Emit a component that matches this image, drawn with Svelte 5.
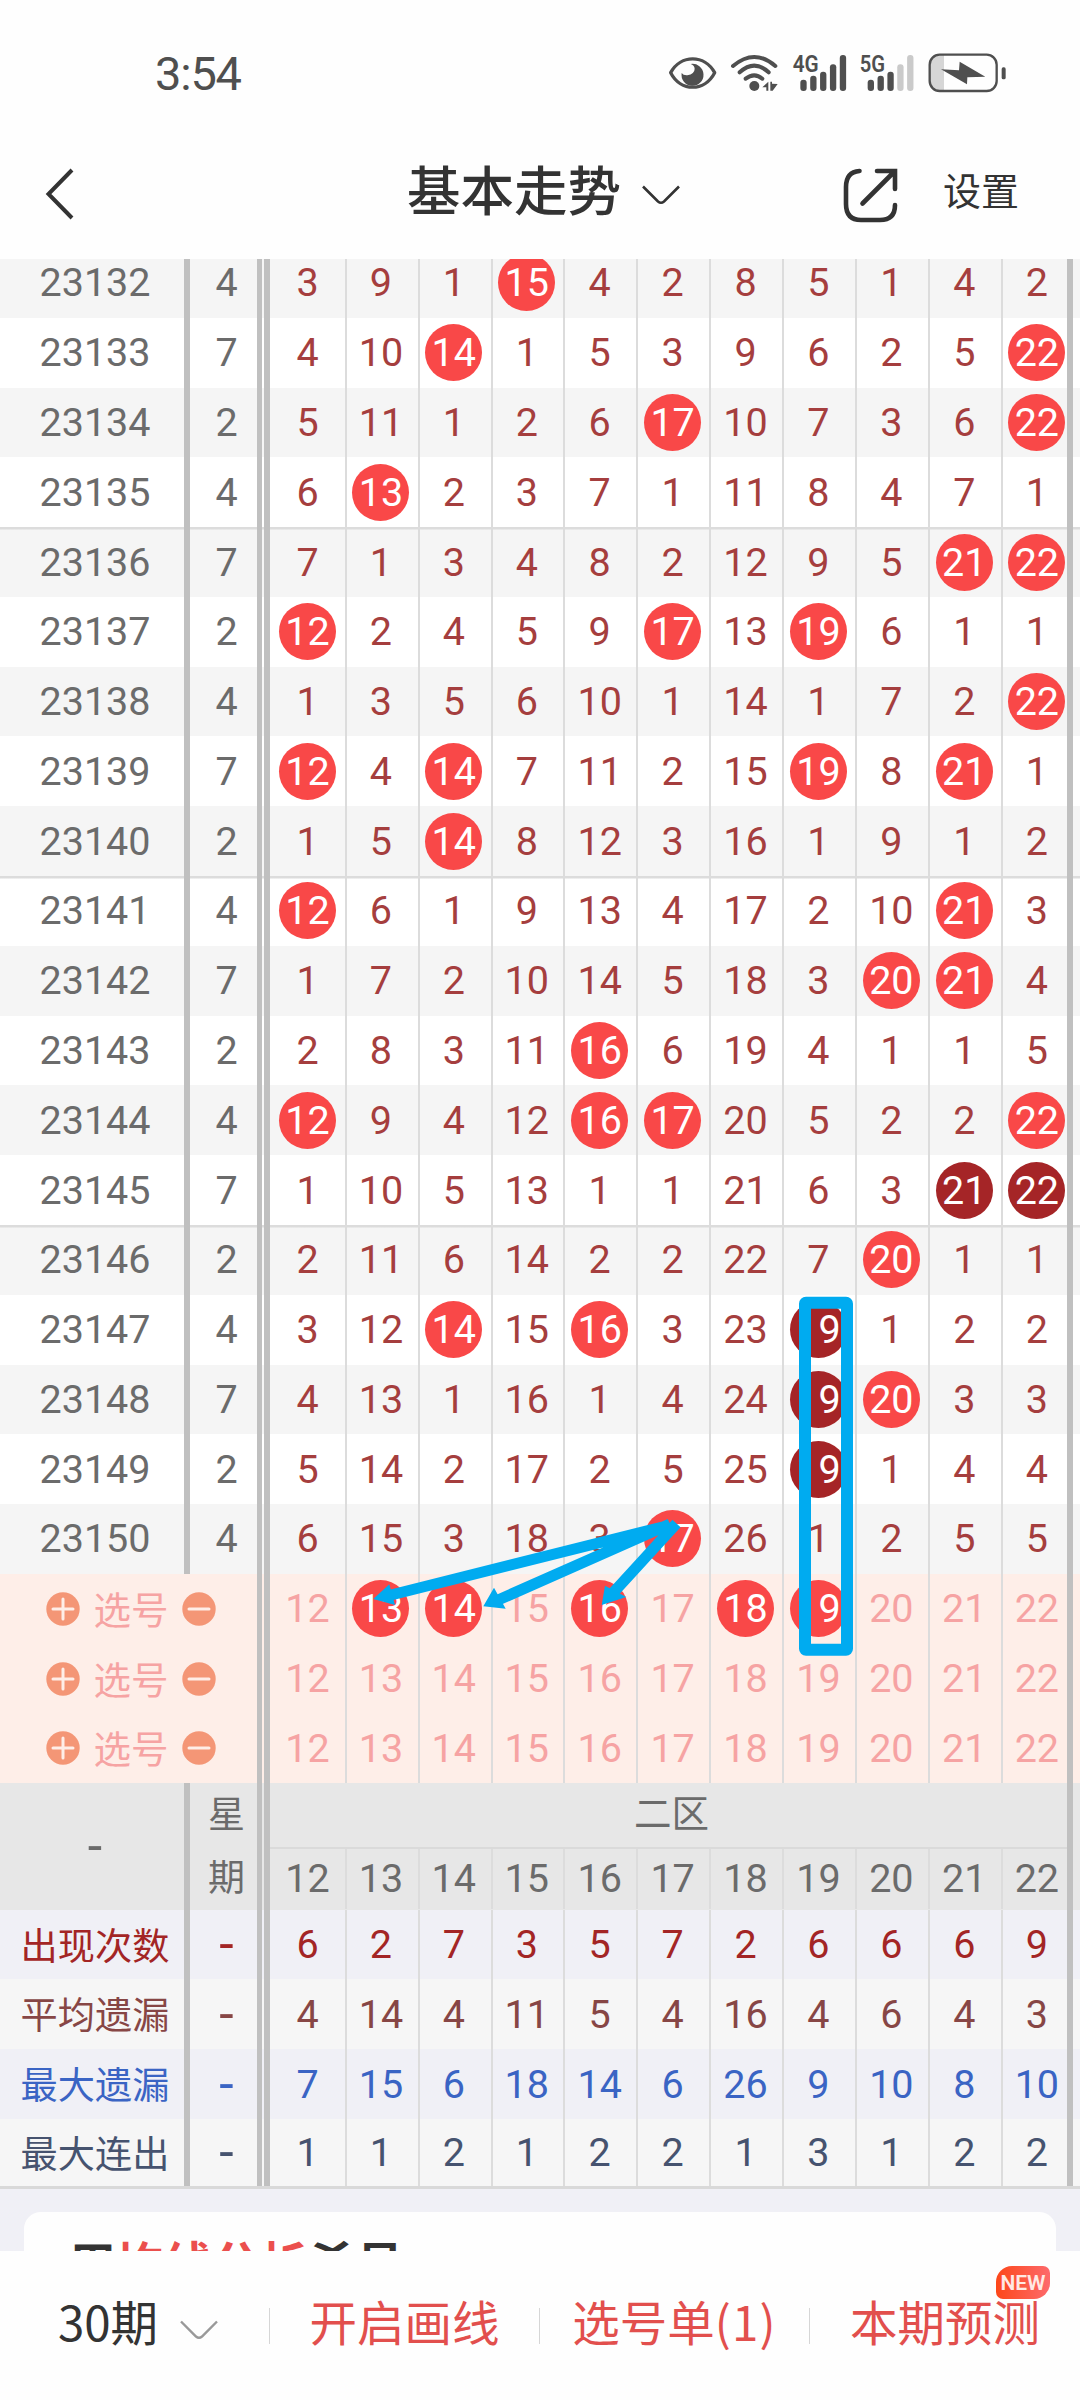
<svelte:options runes />
<script lang="ts">
  /**
   * Lottery trend chart, zone two (12-22).
   * Cell notation: `*n` is a drawn number, `#n` a repeated one (dark ball).
   */
  const columns = [12, 13, 14, 15, 16, 17, 18, 19, 20, 21, 22];

  const source: [string, number, string][] = [
    ['23132', 4, '3 9 1 *15 4 2 8 5 1 4 2'],
    ['23133', 7, '4 10 *14 1 5 3 9 6 2 5 *22'],
    ['23134', 2, '5 11 1 2 6 *17 10 7 3 6 *22'],
    ['23135', 4, '6 *13 2 3 7 1 11 8 4 7 1'],
    ['23136', 7, '7 1 3 4 8 2 12 9 5 *21 *22'],
    ['23137', 2, '*12 2 4 5 9 *17 13 *19 6 1 1'],
    ['23138', 4, '1 3 5 6 10 1 14 1 7 2 *22'],
    ['23139', 7, '*12 4 *14 7 11 2 15 *19 8 *21 1'],
    ['23140', 2, '1 5 *14 8 12 3 16 1 9 1 2'],
    ['23141', 4, '*12 6 1 9 13 4 17 2 10 *21 3'],
    ['23142', 7, '1 7 2 10 14 5 18 3 *20 *21 4'],
    ['23143', 2, '2 8 3 11 *16 6 19 4 1 1 5'],
    ['23144', 4, '*12 9 4 12 *16 *17 20 5 2 2 *22'],
    ['23145', 7, '1 10 5 13 1 1 21 6 3 #21 #22'],
    ['23146', 2, '2 11 6 14 2 2 22 7 *20 1 1'],
    ['23147', 4, '3 12 *14 15 *16 3 23 #19 1 2 2'],
    ['23148', 7, '4 13 1 16 1 4 24 #19 *20 3 3'],
    ['23149', 2, '5 14 2 17 2 5 25 #19 1 4 4'],
    ['23150', 4, '6 15 3 18 3 *17 26 1 2 5 5'],
  ];

  const draws = source.map(([period, weekday, values]) => ({
    period,
    weekday,
    cells: values.split(' ').map((v) => ({
      text: v.replace(/[*#]/, ''),
      hit: /[*#]/.test(v),
      repeat: v[0] === '#',
    })),
    group: Number(period) % 5 === 1,
  }));

  let picks = $state([[13, 14, 16, 18, 19], [], []] as number[][]);

  const stats = [
    { label: '出现次数', tone: 'count', values: [6, 2, 7, 3, 5, 7, 2, 6, 6, 6, 9] },
    { label: '平均遗漏', tone: 'average', values: [4, 14, 4, 11, 5, 4, 16, 4, 6, 4, 3] },
    { label: '最大遗漏', tone: 'longest', values: [7, 15, 6, 18, 14, 6, 26, 9, 10, 8, 10] },
    { label: '最大连出', tone: 'streak', values: [1, 1, 2, 1, 2, 2, 1, 3, 1, 2, 2] },
  ];

  function toggle(row: number, n: number) {
    const picked = picks[row];
    picks[row] = picked.includes(n) ? picked.filter((p) => p !== n) : [...picked, n];
  }

  const bars = [104, 92, 80, 58, 30];
</script>

<div class="screen">
  <header class="status">
    <span class="clock">3:54</span>
    <div class="status-icons">
      <svg viewBox="0 0 190 165" width="63.33" height="55" aria-hidden="true">
        <path d="M32 83C62 28 134 28 164 83C134 141 62 141 32 83Z" fill="none" stroke="#4f4f4f" stroke-width="10" stroke-linejoin="round" />
        <path d="M92 57A33 33 0 1 1 65 84Q70 92 82 91Q104 87 104 71Q103 61 92 57Z" fill="#4f4f4f" />
      </svg>
      <svg viewBox="190 0 190 165" width="63.33" height="55" aria-hidden="true">
        <g fill="none" stroke="#4f4f4f" stroke-width="12" stroke-linecap="round">
          <path d="M220 63Q284 9 347 63" />
          <path d="M240 82Q284 42 327 82" />
          <path d="M258 101Q284 81 308 101" />
        </g>
        <circle cx="284" cy="123" r="15" fill="#4f4f4f" />
        <path d="M308 127L326 110V137H320V127ZM332 110H337V116L354 117L339 137H332Z" fill="#4f4f4f" />
      </svg>
      <svg viewBox="380 0 200 165" width="66.67" height="55" aria-hidden="true">
        <text x="397" y="82" textLength="78" lengthAdjust="spacingAndGlyphs">4G</text>
        {#each bars as top, i}
          <rect x={420 + i * 29.6} y={top} width="19" height={138 - top} rx="9" fill="#4f4f4f" />
        {/each}
      </svg>
      <svg viewBox="580 0 200 165" width="66.67" height="55" aria-hidden="true">
        <text x="600" y="82" textLength="76" lengthAdjust="spacingAndGlyphs">5G</text>
        {#each bars as top, i}
          <rect x={624 + i * 29.6} y={top} width="19" height={138 - top} rx="9" fill={i > 2 ? '#cacaca' : '#4f4f4f'} />
        {/each}
      </svg>
      <svg viewBox="780 0 270 165" width="90" height="55" aria-hidden="true">
        <path d="M852 29H838Q810 29 810 57V110Q810 138 838 138H852Z" fill="#d6d6d6" />
        <rect x="809" y="29" width="201" height="109" rx="30" fill="none" stroke="#4f4f4f" stroke-width="7" />
        <path d="M843 73L897 76L899 50L976 95L922 97L921 118Z" fill="#4f4f4f" />
        <rect x="1025" y="67" width="12" height="36" rx="5" fill="#4f4f4f" />
      </svg>
    </div>
  </header>

  <nav class="topbar">
    <button class="back" aria-label="返回">
      <svg viewBox="0 0 32 52" width="32" height="52" aria-hidden="true">
        <path d="M28 2L4.500 26L28 50" fill="none" stroke="#333" stroke-width="4" />
      </svg>
    </button>
    <button class="title">
      基本走势
      <svg viewBox="0 0 40 22" width="40" height="22" aria-hidden="true">
        <path d="M2 2.500L17 17.500Q20 20 23 17.500L38 2.500" fill="none" stroke="#333" stroke-width="2.600" />
      </svg>
    </button>
    <button class="share" aria-label="分享">
      <svg viewBox="0 0 60 64" width="60" height="64" aria-hidden="true">
        <g fill="none" stroke="#333" stroke-width="4.600" stroke-linecap="round">
          <path d="M19.500 9Q6 10 6 25V42Q6 58 21 58H40Q55 58 55 43" />
          <path d="M37 9H55V27M54 10L22.500 41.500" />
        </g>
      </svg>
    </button>
    <button class="settings">设置</button>
  </nav>

  <main class="viewport">
    <div class="chart">
      {#each draws as row, i}
        <div class="row" class:shade={i % 2 === 0} class:group={row.group}>
          <span class="label">{row.period}</span>
          <i class="rule"></i>
          <span class="day">{row.weekday}</span>
          <i class="rule double"></i>
          {#each row.cells as cell}
            <span class="cell">
              <b class:ball={cell.hit} class:repeat={cell.repeat}>{cell.text}</b>
            </span>
          {/each}
          <i class="rule"></i>
        </div>
      {/each}

      {#each picks as picked, r}
        <div class="row pick">
          <div class="picker">
            <svg viewBox="0 0 34 34" width="34" height="34" aria-hidden="true">
              <circle cx="17" cy="17" r="16.700" fill="#f49676" />
              <path d="M7 17H27M17 7V27" stroke="#feeee8" stroke-width="3" stroke-linecap="round" />
            </svg>
            <span>选号</span>
            <svg viewBox="0 0 34 34" width="34" height="34" aria-hidden="true">
              <circle cx="17" cy="17" r="16.700" fill="#f49676" />
              <path d="M7 17H27" stroke="#feeee8" stroke-width="3" stroke-linecap="round" />
            </svg>
          </div>
          <i class="rule double"></i>
          {#each columns as n}
            <button class="cell" onclick={() => toggle(r, n)}>
              <b class:ball={picked.includes(n)}>{n}</b>
            </button>
          {/each}
          <i class="rule"></i>
        </div>
      {/each}

      <div class="row heading">
        <span class="label dash">-</span>
        <i class="rule"></i>
        <span class="day">星<br />期</span>
        <i class="rule double"></i>
        <div class="zone">
          <span class="zone-name">二区</span>
          <div class="zone-columns">
            {#each columns as n}
              <span class="cell"><b>{n}</b></span>
            {/each}
          </div>
        </div>
        <i class="rule"></i>
      </div>

      {#each stats as stat}
        <div class="row stat {stat.tone}">
          <span class="label">{stat.label}</span>
          <i class="rule"></i>
          <span class="day dash">-</span>
          <i class="rule double"></i>
          {#each stat.values as value}
            <span class="cell"><b>{value}</b></span>
          {/each}
          <i class="rule"></i>
        </div>
      {/each}

      <!-- hand-drawn marks over the chart, in chart pixels -->
      <svg class="marks" viewBox="0 248 1080 1942" width="1080" height="1942" aria-hidden="true">
        <rect x="805" y="1302.700" width="42" height="347" rx="1" />
        <path d="M387 1596L664.500 1526.500M497 1600.500L670 1524M612 1594L676.500 1523.500" />
        <path class="head" d="M373.300 1599L389.300 1584.300L395 1605ZM483.300 1606.300L494 1587.700L505.700 1608.700ZM601.700 1605L605 1585.700L626.300 1597Z" />
      </svg>
    </div>

    <section class="card">
      <h2>用<em>均线分析</em>杀号</h2>
    </section>
  </main>

  <footer class="actions">
    <button class="periods">
      <span>30期</span>
      <svg viewBox="0 0 40 22" width="40" height="22" aria-hidden="true">
        <path d="M2 2.500L17 17.500Q20 20 23 17.500L38 2.500" fill="none" stroke="#999" stroke-width="2.400" />
      </svg>
    </button>
    <button><span>开启画线</span></button>
    <button><span>选号单<span class="count-mark">(1)</span></span></button>
    <button><span>本期预测</span><span class="badge">NEW</span></button>
  </footer>
</div>

<style>
  :global(body) {
    background: #fff;
  }
  .screen {
    display: flex;
    flex-direction: column;
    width: 1080px;
    height: 2400px;
    overflow: hidden;
    background: #fefefe;
    color: #333;
    font-family: Roboto, 'Noto Sans CJK SC', sans-serif;
  }
  button {
    padding: 0;
    border: none;
    background: none;
    color: inherit;
    font: inherit;
  }
  svg {
    flex-shrink: 0;
  }

  .status {
    display: flex;
    justify-content: space-between;
    height: 128px;
    padding: 0 70px 0 155px;
    box-sizing: border-box;
  }
  .clock {
    padding-top: 44px;
    color: #4f4f4f;
    font-size: 47px;
    line-height: 60px;
    letter-spacing: -1.2px;
  }
  .status-icons {
    display: flex;
    padding-top: 45px;
  }
  .status-icons text {
    font-size: 69px;
    font-weight: 600;
    fill: #4f4f4f;
  }

  .topbar {
    display: grid;
    grid-template-columns: 405px 435px 60px 1fr;
    align-items: center;
    height: 131px;
    font-family: 'Noto Sans CJK SC', sans-serif;
  }
  .back {
    display: flex;
    padding-left: 44px;
  }
  .title {
    display: flex;
    align-items: center;
    gap: 20px;
    padding: 0 0 12px 2px;
    font-size: 53.5px;
    font-weight: 500;
    line-height: 64px;
    white-space: nowrap;
  }
  .title svg {
    margin-top: 14px;
  }
  .share {
    display: flex;
  }
  .settings {
    padding: 0 0 9px 43px;
    font-size: 38px;
    line-height: 50px;
    text-align: left;
  }

  .viewport {
    display: flex;
    flex-direction: column;
    height: 1992px;
    overflow: hidden;
    background: #f0f0f6;
  }
  .chart {
    position: relative;
    flex-shrink: 0;
    margin-top: -11px;
    border-bottom: 3px solid #d9d9d9;
    background: #fff;
  }
  .row {
    display: flex;
    height: 69.79px;
    color: #a53e3e;
    font-size: 39.5px;
  }
  .shade {
    background-color: #f5f5f5;
  }
  .group {
    background-image: linear-gradient(#dcdcdc, #dcdcdc);
    background-size: 100% 2.5px;
    background-repeat: no-repeat;
  }
  .label,
  .day {
    display: flex;
    align-items: center;
    justify-content: center;
    flex-shrink: 0;
    box-sizing: border-box;
    padding-left: 6px;
    color: #6b6b6b;
  }
  .label {
    width: 184px;
  }
  .day {
    width: 67px;
  }
  .rule {
    flex-shrink: 0;
    width: 6px;
    background: #c0c0c0;
  }
  .double {
    width: 2.4px;
    border: solid #c0c0c0;
    border-width: 0 6px 0 5.8px;
    background: none;
  }
  .cell {
    display: flex;
    align-items: center;
    justify-content: center;
    flex-shrink: 0;
    box-sizing: border-box;
    width: 72.93px;
    padding-right: 2.5px;
    border-right: 2.5px solid #dcdcdc;
  }
  .double + .cell,
  .zone-columns .cell:first-child {
    width: 76.3px;
    padding-right: 0;
  }
  .cell:has(+ .rule),
  .zone-columns .cell:last-child {
    width: 63.8px;
    padding: 0 0 0 4px;
    border-right: none;
  }
  b {
    font-weight: 400;
  }
  .ball {
    width: 57px;
    height: 57px;
    border-radius: 50%;
    background: #f94848;
    color: #fff;
    line-height: 57px;
    text-align: center;
  }
  .repeat {
    background: #a52527;
  }

  .pick {
    background: #feeee8;
    color: #f6a3a3;
  }
  .picker {
    display: flex;
    align-items: center;
    gap: 13.5px;
    flex-shrink: 0;
    width: 257px;
    box-sizing: border-box;
    padding-left: 46px;
    font-size: 37.5px;
  }
  .picker span {
    padding-bottom: 3px;
  }

  .heading {
    height: 126.5px;
    background: #e7e7e7;
    color: #6b6b6b;
  }
  .heading .day {
    padding-top: 2px;
    font-size: 37px;
    line-height: 63.5px;
  }
  .zone {
    flex-shrink: 0;
    width: 796.4px;
  }
  .zone-name {
    display: block;
    height: 64px;
    padding-left: 6px;
    border-bottom: 2.5px solid #dadada;
    font-size: 37.5px;
    line-height: 63px;
    text-align: center;
  }
  .zone-columns {
    display: flex;
    height: 60px;
  }
  .zone-columns b {
    padding-bottom: 2px;
  }
  .dash {
    font-size: 52px;
  }

  .stat .label {
    padding-bottom: 2px;
    font-size: 37.2px;
  }
  .stat .label,
  .stat .day {
    color: inherit;
  }
  .count {
    background: #f0f0f6;
    color: #a32525;
  }
  .average {
    background: #f6f6f6;
    color: #874645;
  }
  .longest {
    background: #f0f0f6;
    color: #3a64c4;
  }
  .streak {
    height: 67px;
    background: #f6f6f6;
    color: #46536f;
  }

  .marks {
    position: absolute;
    top: 0;
    left: 0;
    fill: none;
    stroke: #00abf0;
    stroke-width: 11;
    stroke-linejoin: round;
    pointer-events: none;
  }
  .marks rect {
    stroke-width: 12;
  }
  .marks .head {
    fill: #00abf0;
    stroke: none;
  }

  .card {
    flex-shrink: 0;
    height: 200px;
    margin: 23px 24px 0;
    padding: 14px 44px;
    border-radius: 17px;
    background: #fefefe;
  }
  .card h2 {
    margin: 0;
    font-family: 'Noto Sans CJK SC', sans-serif;
    font-size: 48px;
    font-weight: 700;
    line-height: 70px;
  }
  .card em {
    color: #eb4f4d;
    font-style: normal;
  }

  .actions {
    display: grid;
    grid-template-columns: repeat(4, 270px);
    flex: 1;
    background: #fefefe;
    font-family: 'Noto Sans CJK SC', sans-serif;
    font-size: 47.5px;
  }
  .actions button {
    position: relative;
    display: flex;
    align-items: center;
    justify-content: center;
    height: 36px;
    margin-top: 57px;
    border-right: 1.5px solid #d6d6d6;
    color: #e24f4d;
    white-space: nowrap;
  }
  .actions button:last-child {
    border-right: none;
  }
  .actions button > span:first-child {
    padding-bottom: 11px;
  }
  .count-mark {
    letter-spacing: 1.2px;
  }
  .actions .periods {
    gap: 21px;
    padding-left: 8px;
    color: #333;
  }
  .periods svg {
    margin-top: 7px;
  }
  .actions .badge {
    position: absolute;
    top: -42px;
    right: 30px;
    width: 54px;
    height: 33px;
    border-radius: 16px 7px 16px 7px;
    background: linear-gradient(90deg, #fd4719, #fd6a6c);
    color: #ffe9e4;
    font-family: Roboto, sans-serif;
    font-size: 21px;
    font-weight: 600;
    line-height: 34px;
    text-align: center;
  }
</style>
